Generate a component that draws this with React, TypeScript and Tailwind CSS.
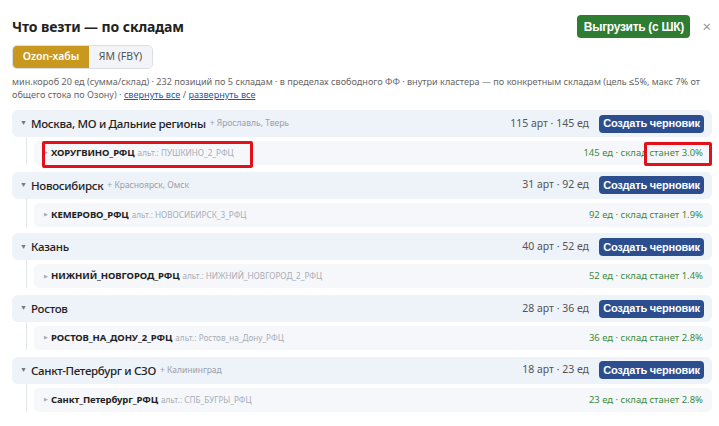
import React from 'react';

type Wh = { name: string; alt: string; units: number; pct: string; mark?: boolean };
type Group = { title: string; extra?: string; arts: number; units: number; items: Wh[] };

const groups: Group[] = [
  {
    title: 'Москва, МО и Дальние регионы',
    extra: '+ Ярославль, Тверь',
    arts: 115,
    units: 145,
    items: [{ name: 'ХОРУГВИНО_РФЦ', alt: 'ПУШКИНО_2_РФЦ', units: 145, pct: '3.0%', mark: true }],
  },
  {
    title: 'Новосибирск',
    extra: '+ Красноярск, Омск',
    arts: 31,
    units: 92,
    items: [{ name: 'КЕМЕРОВО_РФЦ', alt: 'НОВОСИБИРСК_3_РФЦ', units: 92, pct: '1.9%' }],
  },
  {
    title: 'Казань',
    arts: 40,
    units: 52,
    items: [{ name: 'НИЖНИЙ_НОВГОРОД_РФЦ', alt: 'НИЖНИЙ_НОВГОРОД_2_РФЦ', units: 52, pct: '1.4%' }],
  },
  {
    title: 'Ростов',
    arts: 28,
    units: 36,
    items: [{ name: 'РОСТОВ_НА_ДОНУ_2_РФЦ', alt: 'Ростов_на_Дону_РФЦ', units: 36, pct: '2.8%' }],
  },
  {
    title: 'Санкт-Петербург и СЗО',
    extra: '+ Калининград',
    arts: 18,
    units: 23,
    items: [{ name: 'Санкт_Петербург_РФЦ', alt: 'СПБ_БУГРЫ_РФЦ', units: 23, pct: '2.8%' }],
  },
];

export default function App() {
  return (
    <div className="w-[719px] h-[426px] bg-white pl-3 pr-[7px] pt-[15px] font-['Noto_Sans',sans-serif] text-[#222] overflow-hidden">
      {/* Header */}
      <div className="flex items-center h-[23px]">
        <h1 className="text-[14px] font-bold tracking-[-0.1px]">Что везти — по складам</h1>
        <button className="ml-auto h-[23px] w-[113px] rounded-[4px] bg-[#2e7d32] text-white text-[12px] font-bold font-['Liberation_Sans',sans-serif] tracking-[-0.3px]">
          Выгрузить (с ШК)
        </button>
        <span className="ml-[12px] mr-[1px] text-[#999] text-[15px] leading-none">×</span>
      </div>

      {/* Tabs */}
      <div className="mt-[7px] flex w-[141px] h-[24px] rounded-[5px] border border-[#d9dee7] overflow-hidden text-[10.5px]">
        <div className="w-[76px] flex items-center justify-center bg-[#c9981e] text-white font-semibold">Ozon-хабы</div>
        <div className="flex-1 flex items-center justify-center bg-[#f2f4f8] text-[#555]">ЯМ (FBY)</div>
      </div>

      {/* Description */}
      <p className="mt-[6px] text-[9.1px] leading-[13px] text-[#666]">
        мин.короб 20 ед (сумма/склад) · 232 позиций по 5 складам · в пределах свободного ФФ · внутри кластера — по конкретным складам (цель ≤5%, макс 7% от общего стока по Озону) · <span className="text-[#2456a6] underline">свернуть все</span> / <span className="text-[#2456a6] underline">развернуть все</span>
      </p>

      {/* Groups */}
      <div className="mt-[9px] flex flex-col gap-[6.7px]">
        {groups.map((g) => (
          <div key={g.title}>
            <div className="h-[27px] flex items-center rounded-[6px] bg-[#eef2f9] pl-[8px] pr-[8px]">
              <span className="text-[#777] text-[7px] mr-[4px]">▼</span>
              <span className="text-[11.5px] font-medium tracking-[-0.3px] text-[#222]">{g.title}</span>
              {g.extra && <span className="ml-[4px] text-[8.5px] text-[#9aa0a8]">{g.extra}</span>}
              <span className="ml-auto text-[10.5px] text-[#555]">
                {g.arts} арт · {g.units} ед
              </span>
              <button className="ml-[10px] h-[18px] w-[105px] rounded-[4px] bg-[#2c4e8e] text-white text-[11px] font-bold font-['Liberation_Sans',sans-serif] tracking-[-0.2px]">
                Создать черновик
              </button>
            </div>
            <div className="ml-[14px] border-l border-[#e2e6ed] pl-[7px] pt-[4px]">
              {g.items.map((w) => (
                <div key={w.name} className="relative h-[24px] flex items-center rounded-[5px] bg-[#f5f7fb] pl-[10px] pr-[9px]">
                  <span className="text-[#aaa] text-[5px] mr-[3px]">▶</span>
                  <span className="text-[9.5px] font-bold tracking-[-0.1px] text-[#222]">{w.name}</span>
                  <span className="ml-[3px] text-[8.2px] text-[#a8adb5]">альт.: {w.alt}</span>
                  <span className="ml-auto text-[9.5px] text-[#3c8a3c]">
                    {w.units} ед · склад станет {w.pct}
                  </span>
                  {w.mark && (
                    <>
                      <div className="absolute left-[8px] top-0 w-[211px] h-[27px] border-[3px] border-[#e3101a] rounded-[2px]" />
                      <div className="absolute right-0 top-[1px] w-[68px] h-[24px] border-[3px] border-[#e3101a] rounded-[2px]" />
                    </>
                  )}
                </div>
              ))}
            </div>
          </div>
        ))}
      </div>
    </div>
  );
}
